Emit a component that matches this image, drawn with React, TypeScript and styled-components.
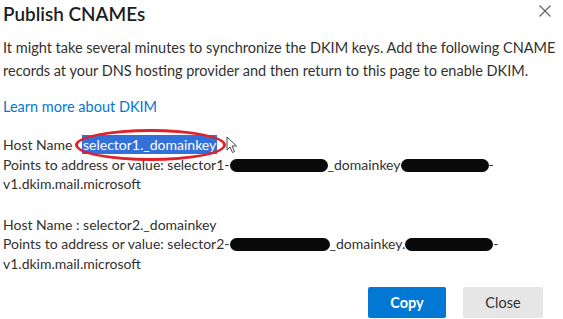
import styled, { createGlobalStyle } from "styled-components"

const GlobalStyle = createGlobalStyle`
    html, body {
        margin: 0;
        padding: 0;
        background: #fff;
    }
    body {
        font-family: Lato, "Open Sans", sans-serif;
        color: #323130;
        overflow: hidden;
    }
`

const Dialog = styled.div`
    width: 563px;
    height: 319px;
    box-sizing: border-box;
    padding: 0 20px 0 3px;
    display: flex;
    flex-direction: column;
`

const Header = styled.div`
    display: flex;
    justify-content: space-between;
    align-items: flex-start;
    height: 30px;
`

const Title = styled.h1`
    margin: 0;
    padding-top: 1px;
    font-size: 18.9px;
    font-weight: 600;
    line-height: 26px;
    color: #201f1e;
`

const CloseIcon = styled.button`
    border: none;
    background: none;
    padding: 0;
    margin: 4px -9px 0 0;
    width: 14px;
    height: 14px;
    display: flex;
    color: #605e5c;
`

const Intro = styled.p`
    margin: 6px 0 0;
    font-size: 14.5px;
    line-height: 23px;
    white-space: nowrap;
`

const LearnLink = styled.a`
    display: block;
    margin-top: 14px;
    font-size: 14.5px;
    line-height: 22px;
    color: #0078d4;
    text-decoration: none;
`

const Record = styled.div<{ $gap: number }>`
    margin-top: ${p => p.$gap}px;
    font-size: 14px;
    line-height: 19.5px;
`

const Line = styled.div`
    white-space: nowrap;
`

const Marked = styled.span`
    position: relative;
    margin-left: 6px;
    background: #3470d9;
    color: #fff;
    padding: 1px 1px;
`

const RedRing = styled.span`
    position: absolute;
    left: -7px;
    right: -9px;
    top: -6px;
    bottom: -7px;
    border: 3px solid #e0202a;
    border-radius: 50%;
    pointer-events: none;
`

const Pointer = styled.svg`
    position: absolute;
    right: -21px;
    top: 1px;
    pointer-events: none;
`

const Blot = styled.span<{ $w: number }>`
    display: inline-block;
    width: ${p => p.$w}px;
    height: 13px;
    vertical-align: -2px;
    background: #0a0a0a;
    border-radius: 7px;
`

const Footer = styled.div`
    display: flex;
    justify-content: flex-end;
    gap: 17px;
    margin-top: auto;
    margin-bottom: 1px;
`

const Button = styled.button<{ $primary?: boolean }>`
    width: ${p => (p.$primary ? 78 : 80)}px;
    height: 31px;
    border: none;
    border-radius: 2px;
    font-family: Lato, "Open Sans", sans-serif;
    font-size: 14.5px;
    font-weight: ${p => (p.$primary ? 700 : 400)};
    background: ${p => (p.$primary ? "#0078d4" : "#e6e6e6")};
    color: ${p => (p.$primary ? "#fff" : "#323130")};
`

export default function App() {
    return (
        <>
            <GlobalStyle />
            <Dialog>
                <Header>
                    <Title>Publish CNAMEs</Title>
                    <CloseIcon aria-label="Close">
                        <svg width="14" height="14" viewBox="0 0 14 14">
                            <path d="M1.5 1.5 L12.5 12.5 M12.5 1.5 L1.5 12.5" stroke="currentColor" strokeWidth="1.1" fill="none" />
                        </svg>
                    </CloseIcon>
                </Header>
                <Intro>
                    It might take several minutes to synchronize the DKIM keys. Add the following CNAME
                    <br />
                    records at your DNS hosting provider and then return to this page to enable DKIM.
                </Intro>
                <LearnLink href="#">Learn more about DKIM</LearnLink>
                <Record $gap={17}>
                    <Line>
                        Host Name{" "}
                        <Marked>
                            selector1._domainkey
                            <RedRing />
                            <Pointer width="12" height="18" viewBox="0 0 12 18">
                                <path d="M1 1 L1 14 L4 11 L6.5 16.5 L8.5 15.5 L6 10 L10.5 10 Z" fill="#fff" stroke="#333" strokeWidth="0.9" />
                            </Pointer>
                        </Marked>
                    </Line>
                    <Line>
                        Points to address or value: selector1-<Blot $w={98} />_domainkey<Blot $w={88} />-
                    </Line>
                    <Line>v1.dkim.mail.microsoft</Line>
                </Record>
                <Record $gap={21}>
                    <Line>Host Name : selector2._domainkey</Line>
                    <Line>
                        Points to address or value: selector2-<Blot $w={100} />_domainkey.<Blot $w={88} />-
                    </Line>
                    <Line>v1.dkim.mail.microsoft</Line>
                </Record>
                <Footer>
                    <Button $primary>Copy</Button>
                    <Button>Close</Button>
                </Footer>
            </Dialog>
        </>
    )
}
